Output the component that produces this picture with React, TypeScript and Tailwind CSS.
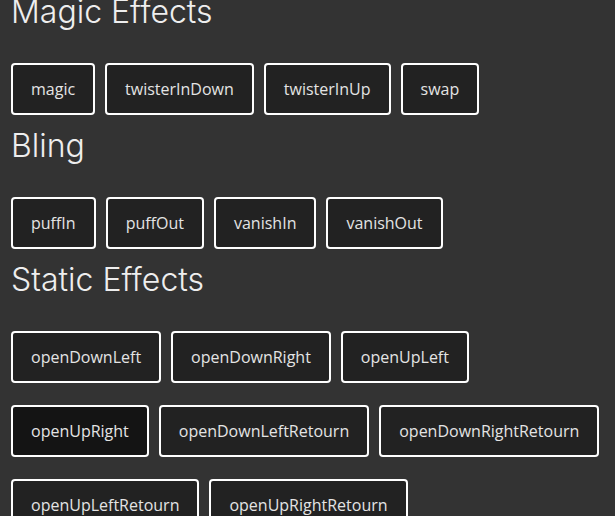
const sections: { title: string; effects: string[] }[] = [
  { title: 'Magic Effects', effects: ['magic', 'twisterInDown', 'twisterInUp', 'swap'] },
  { title: 'Bling', effects: ['puffIn', 'puffOut', 'vanishIn', 'vanishOut'] },
  {
    title: 'Static Effects',
    effects: [
      'openDownLeft',
      'openDownRight',
      'openUpLeft',
      'openUpRight',
      'openDownLeftRetourn',
      'openDownRightRetourn',
      'openUpLeftRetourn',
      'openUpRightRetourn',
    ],
  },
];

export default function App() {
  return (
    <div
      className="min-h-screen overflow-hidden bg-[#333333] pl-[11px]"
      style={{ fontFamily: '"Open Sans", "Liberation Sans", sans-serif' }}
    >
      <div className="-mt-[8px] flex flex-col">
        {sections.map((section) => (
          <div key={section.title} className="mb-[11px]">
            <h2 className="mb-[31px] font-['Inter',sans-serif] text-[32px] font-light leading-[40px] text-[#eeeeee]">
              {section.title}
            </h2>
            <div className="flex flex-wrap gap-x-[10px] gap-y-[22px]">
              {section.effects.map((effect) => (
                <button
                  key={effect}
                  className={`h-[52px] rounded-[4px] border-2 border-white px-[18px] text-[16px] text-[#e4e4e4] ${
                    effect === 'openUpRight' ? 'bg-[#141414]' : 'bg-[#222222]'
                  }`}
                >
                  {effect}
                </button>
              ))}
            </div>
          </div>
        ))}
      </div>
    </div>
  );
}
